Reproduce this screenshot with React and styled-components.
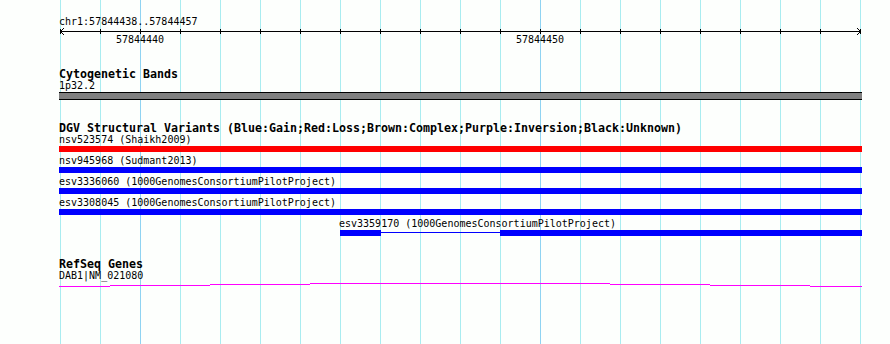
import React from 'react';
import styled, { createGlobalStyle } from 'styled-components';

const START = 57844438;
const BP_PX = 40;
const WIDTH = 803;

// local x of a base offset inside the canvas (canvas starts at page x=59)
const toX = (bp) => 1 + bp * BP_PX;

const GlobalStyle = createGlobalStyle`
  html, body {
    margin: 0;
    padding: 0;
    background: #fdfffd;
  }
`;

const Page = styled.div`
  width: 890px;
  height: 344px;
  box-sizing: border-box;
  padding-left: 59px;
  background: #fdfffd;
  overflow: hidden;
  font-family: "DejaVu Sans Mono", "Liberation Mono", monospace;
  color: #000;
`;

const Canvas = styled.div`
  width: ${WIDTH}px;
  height: 100%;
  box-sizing: border-box;
  padding-top: 16px;
  display: flex;
  flex-direction: column;
  background-image:
    linear-gradient(to right,
      transparent 81px, #8fd3f2 81px, #8fd3f2 82px,
      transparent 82px, transparent 481px,
      #8fd3f2 481px, #8fd3f2 482px, transparent 482px),
    linear-gradient(to right, #a9ecf0 0, #a9ecf0 1px, transparent 1px);
  background-size: 100% 100%, 40px 100%;
  background-position: 0 0, 1px 0;
  background-repeat: no-repeat, repeat-x;
`;

const SmallText = styled.div`
  height: 12px;
  padding-left: ${(p) => p.$offset || 0}px;
  font-size: 10px;
  line-height: 12px;
  white-space: pre;
`;

const TrackTitle = styled.div`
  height: 12px;
  font-size: 11.63px;
  font-weight: bold;
  line-height: 12px;
  white-space: pre;
`;

const Ruler = styled.section`
  display: flex;
  flex-direction: column;
`;

const Axis = styled.svg`
  display: block;
  overflow: visible;
`;

const TickLabels = styled.div`
  position: relative;
  height: 12px;
`;

const TickLabel = styled.span`
  position: absolute;
  top: 0;
  font-size: 10px;
  line-height: 12px;
  transform: translateX(-50%);
  white-space: pre;
`;

const Track = styled.section`
  display: flex;
  flex-direction: column;
  margin-top: 22px;
`;

const Rows = styled.div`
  display: flex;
  flex-direction: column;
  gap: 3px;
`;

const FeatureRow = styled.div`
  display: flex;
  flex-direction: column;
`;

const BandBar = styled.div`
  height: 8px;
  box-sizing: border-box;
  background: #808080;
  border-top: 1px solid #000;
  border-bottom: 1px solid #000;
`;

const BarLane = styled.div`
  position: relative;
  height: 6px;
`;

const Block = styled.div`
  position: absolute;
  top: 0;
  height: 6px;
  background: ${(p) => p.$color};
`;

const Connector = styled.div`
  position: absolute;
  top: 2px;
  height: 1px;
  background: ${(p) => p.$color};
`;

const GeneLine = styled.svg`
  display: block;
`;

const variants = [
  { name: 'nsv523574', source: 'Shaikh2009', color: '#ff0000', blocks: [[0, 20]] },
  { name: 'nsv945968', source: 'Sudmant2013', color: '#0000ff', blocks: [[0, 20]] },
  { name: 'esv3336060', source: '1000GenomesConsortiumPilotProject', color: '#0000ff', blocks: [[0, 20]] },
  { name: 'esv3308045', source: '1000GenomesConsortiumPilotProject', color: '#0000ff', blocks: [[0, 20]] },
  { name: 'esv3359170', source: '1000GenomesConsortiumPilotProject', color: '#0000ff', blocks: [[7, 8], [11, 20]] },
];

// intron line of DAB1, slightly sloped across the view: [fromX, toX, row]
const geneSegments = [
  [0, 51, 4],
  [51, 151, 3],
  [151, 251, 2],
  [251, 551, 1],
  [551, 651, 2],
  [651, 751, 3],
  [751, 803, 4],
];

const blockLeft = (bp) => toX(bp) - (bp === 0 ? 1 : 0);
const blockRight = (bp) => toX(bp) + (bp === 20 ? 2 : 1);

function Feature({ feature }) {
  const { blocks, color } = feature;
  const first = blocks[0][0];
  const gaps = blocks.slice(1).map((b, i) => [blockRight(blocks[i][1]), blockLeft(b[0])]);
  return (
    <FeatureRow>
      <SmallText $offset={toX(first) - 1}>
        {feature.name} ({feature.source})
      </SmallText>
      <BarLane>
        {gaps.map(([a, b]) => (
          <Connector key={a} $color={color} style={{ left: a, width: b - a }} />
        ))}
        {blocks.map(([s, e]) => (
          <Block
            key={s}
            $color={color}
            style={{ left: blockLeft(s), width: blockRight(e) - blockLeft(s) }}
          />
        ))}
      </BarLane>
    </FeatureRow>
  );
}

function ScaleBar() {
  const ticks = Array.from({ length: 21 }, (_, i) => toX(i) + 0.5);
  return (
    <Ruler>
      <SmallText>chr1:{START}..{START + 19}</SmallText>
      <Axis width={WIDTH} height="6" viewBox={`0 0 ${WIDTH} 6`}>
        <line x1="1" y1="3.5" x2="802" y2="3.5" stroke="#000" />
        {ticks.map((x) => (
          <line key={x} x1={x} y1="1" x2={x} y2="6" stroke="#000" />
        ))}
        <polyline points="5,0 1.5,3.5 5,7" fill="none" stroke="#000" />
        <polyline points="798,0 801.5,3.5 798,7" fill="none" stroke="#000" />
      </Axis>
      <TickLabels>
        {[2, 12].map((bp) => (
          <TickLabel key={bp} style={{ left: toX(bp) }}>
            {START + bp}
          </TickLabel>
        ))}
      </TickLabels>
    </Ruler>
  );
}

export default function App() {
  return (
    <>
      <GlobalStyle />
      <Page>
        <Canvas>
          <ScaleBar />

          <Track>
            <TrackTitle>Cytogenetic Bands</TrackTitle>
            <SmallText>1p32.2</SmallText>
            <BandBar />
          </Track>

          <Track>
            <TrackTitle>
              DGV Structural Variants (Blue:Gain;Red:Loss;Brown:Complex;Purple:Inversion;Black:Unknown)
            </TrackTitle>
            <Rows>
              {variants.map((v) => (
                <Feature key={v.name} feature={v} />
              ))}
            </Rows>
          </Track>

          <Track>
            <TrackTitle>RefSeq Genes</TrackTitle>
            <SmallText>DAB1|NM_021080</SmallText>
            <GeneLine width={WIDTH} height="5" viewBox={`0 0 ${WIDTH} 5`}>
              {geneSegments.map(([a, b, y]) => (
                <rect key={a} x={a} y={y} width={b - a} height="1" fill="#ff00ff" />
              ))}
            </GeneLine>
          </Track>
        </Canvas>
      </Page>
    </>
  );
}
